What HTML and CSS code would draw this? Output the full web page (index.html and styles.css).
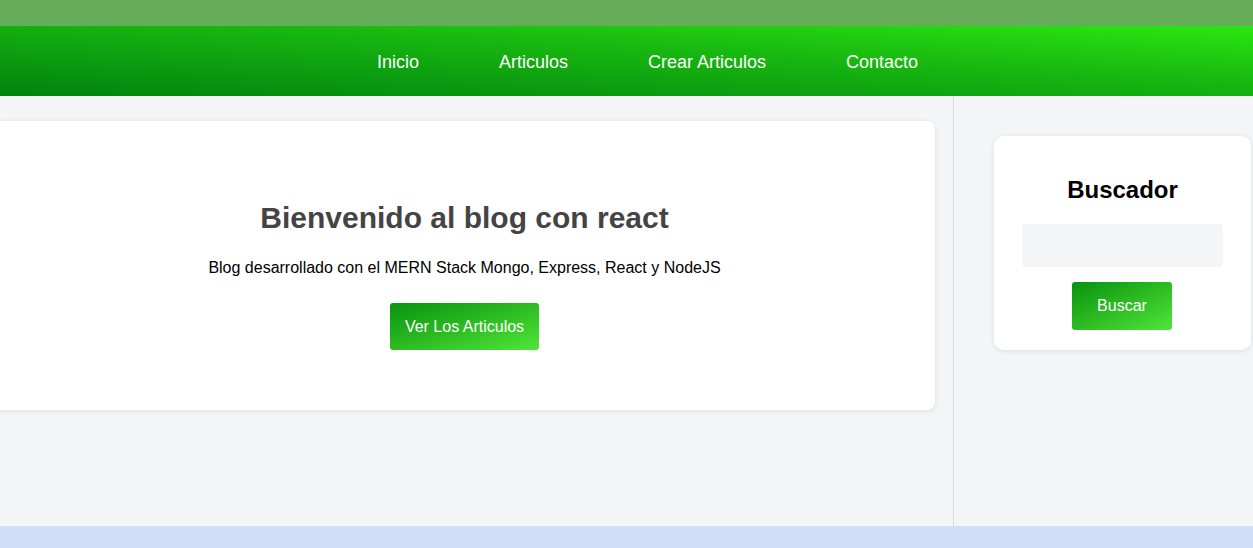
FILE: index.html
```html
<!DOCTYPE html>
<html lang="es">
<head>
<meta charset="utf-8">
<title>Blog con React</title>
<link rel="stylesheet" href="styles.css">
</head>
<body>
<header class="topbar"></header>
<nav class="nav">
  <ul class="nav-list">
    <li><a href="#">Inicio</a></li>
    <li><a href="#">Articulos</a></li>
    <li><a href="#">Crear Articulos</a></li>
    <li><a href="#">Contacto</a></li>
  </ul>
</nav>
<div class="layout">
  <main class="content">
    <section class="hero">
      <h1 class="hero-title">Bienvenido al blog con react</h1>
      <p class="hero-text">Blog desarrollado con el MERN Stack Mongo, Express, React y NodeJS</p>
      <a class="btn btn-hero" href="#">Ver Los Articulos</a>
    </section>
  </main>
  <aside class="sidebar">
    <div class="search-card">
      <h3 class="search-title">Buscador</h3>
      <input class="search-input" type="text">
      <button class="btn btn-search">Buscar</button>
    </div>
  </aside>
</div>
<footer class="footer"></footer>
</body>
</html>
```

FILE: styles.css
```css
* { box-sizing: border-box; }
html, body { margin: 0; padding: 0; }
body {
  font-family: "Liberation Sans", Arial, sans-serif;
  background: #f4f5f7;
  overflow: hidden;
}
.topbar {
  height: 26px;
  background: #65ad59;
}
.nav {
  height: 70px;
  padding-top: 2px;
  background: linear-gradient(to top right, #01830d 0%, #0c9d10 30%, #18b810 60%, #2ae711 100%);
  display: flex;
  justify-content: center;
  align-items: center;
}
.nav-list {
  list-style: none;
  margin: 0;
  padding: 0 0 0 42px;
  display: flex;
}
.nav-list li { padding: 0 40px; }
.nav-list a {
  color: #fff;
  text-decoration: none;
  font-size: 18px;
  line-height: 21px;
}
.layout {
  display: flex;
  height: 430px;
}
.content {
  width: 954px;
  border-right: 1px solid #dcdcdc;
  padding: 25px 18px 0 0;
}
.hero {
  margin-left: -6px;
  background: #fff;
  border-radius: 8px;
  box-shadow: 0 1px 6px rgba(0,0,0,0.09);
  padding: 60px 20px 60px;
  text-align: center;
  height: 289px;
}
.hero-title {
  margin: 20px 0 0;
  font-size: 30px;
  line-height: 34px;
  color: #444;
  font-weight: bold;
}
.hero-text {
  margin: 24px 0 26px;
  font-size: 16px;
  line-height: 18px;
  color: #000;
}
.btn {
  display: inline-block;
  border: none;
  border-radius: 3px;
  color: #fff;
  font-family: "Liberation Sans", Arial, sans-serif;
  font-size: 16px;
  text-decoration: none;
  background: linear-gradient(to bottom right, #08930f 0%, #2dbb22 50%, #4fe639 100%);
}
.btn-hero {
  width: 149px;
  height: 47px;
  line-height: 47px;
}
.sidebar {
  flex: 1;
  padding: 40px 2px 0 40px;
}
.search-card {
  background: #fff;
  border-radius: 10px;
  box-shadow: 0 1px 6px rgba(0,0,0,0.09);
  padding: 40px 28px 20px;
  display: flex;
  flex-direction: column;
  align-items: center;
}
.search-title {
  margin: 0 0 20px;
  font-size: 24px;
  line-height: 28px;
  color: #000;
}
.search-input {
  width: 100%;
  height: 43px;
  border: none;
  border-radius: 4px;
  background: #f4f5f7;
  margin: 0 0 15px;
}
.btn-search {
  width: 100px;
  height: 48px;
  line-height: 48px;
  padding: 0;
  margin-right: 1px;
}
.footer {
  height: 40px;
  background: #d0def7;
}
```
